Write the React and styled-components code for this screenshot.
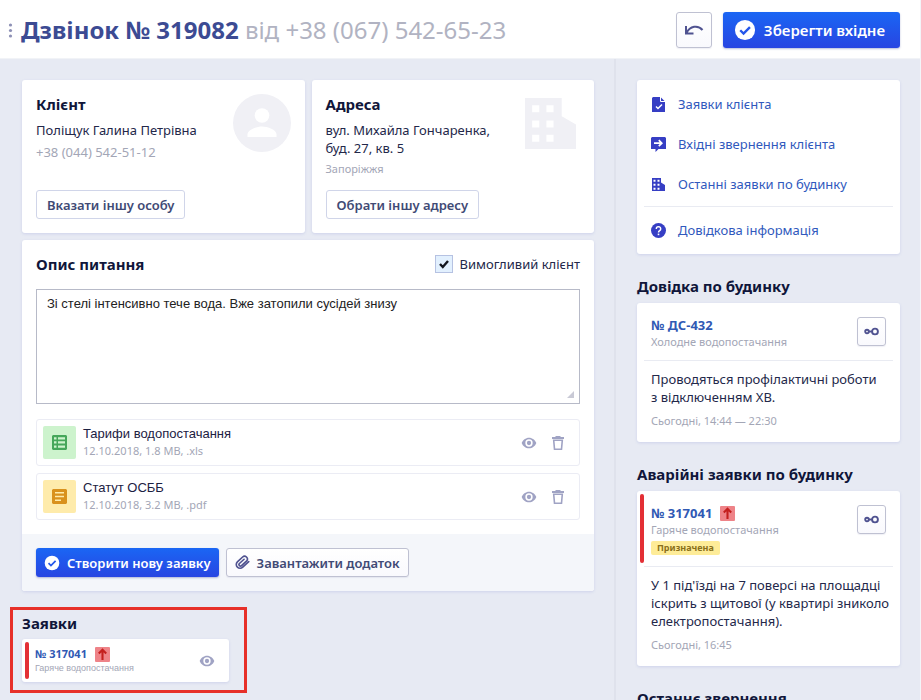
import React from 'react';
import styled, { createGlobalStyle, css } from 'styled-components';

const GlobalStyle = createGlobalStyle`
  *, *::before, *::after { box-sizing: border-box; }
  html { scrollbar-width: none; }
  body {
    margin: 0;
    background: #e7eaf3;
    color: #23284a;
    font-family: "Noto Sans", sans-serif;
    font-size: 13px;
    line-height: 18px;
  }
  h1, h2, h3, p, ul { margin: 0; padding: 0; }
  ul { list-style: none; }
  button, textarea, input { font: inherit; color: inherit; margin: 0; }
  button { cursor: pointer; }
  svg { display: block; flex: none; }
`;

const Page = styled.div`
  min-height: 100vh;
  display: flex;
  flex-direction: column;
  border-right: 1px solid #f3f5f9;
`;

const Header = styled.header`
  display: flex;
  align-items: center;
  gap: 11px;
  padding: 12px 20px 10px 8px;
  background: #fff;
  border-bottom: 1px solid #f1f3f7;
`;

const MenuHandle = styled.button`
  display: block;
  padding: 0;
  border: 0;
  background: none;
  color: #8d90b5;
`;

const PageTitle = styled.h1`
  flex: 1;
  margin-left: -3px;
  color: #3c4b93;
  font-size: 24px;
  line-height: 36px;
  font-weight: 700;
  white-space: nowrap;
`;

const Muted = styled.span`
  color: #b1b3c2;
  font-weight: 400;
`;

const heights = { large: 36, regular: 29 };

const Button = styled.button`
  display: inline-flex;
  align-items: center;
  justify-content: center;
  gap: 7px;
  height: ${(p) => heights[p.$size || 'regular']}px;
  padding: 0 ${(p) => p.$pad || 10}px;
  border: 1px solid #d0d5e9;
  border-radius: 3px;
  background: #fff;
  color: #414a75;
  font-size: 13px;
  font-weight: 600;
  white-space: nowrap;
  ${(p) => p.$variant === 'raised' && css`
    border-color: #bfc1d2;
    background: linear-gradient(#fff, #f9f9fd);
    box-shadow: 0 1px 1px rgba(60, 70, 140, 0.08);
  `}
  ${(p) => p.$variant === 'primary' && css`
    border: 0;
    background: linear-gradient(#1a66f4, #2845e2);
    color: #fff;
    box-shadow: 0 1px 2px rgba(50, 60, 150, 0.35);
  `}
  ${(p) => p.$size === 'large' && css`
    gap: 8px;
    padding: 0 15px 0 11px;
    font-size: 15px;
  `}
`;

const SquareButton = styled(Button)`
  flex: none;
  width: ${(p) => heights[p.$size || 'regular']}px;
  padding: 0;
`;

const IconButton = styled.button`
  display: block;
  padding: 0;
  border: 0;
  background: none;
  color: #a0a3c4;
`;

const Columns = styled.div`
  flex: 1;
  display: flex;
`;

const Main = styled.main`
  flex: 1;
  min-width: 0;
  padding: 21px 20px 16px 22px;
`;

const Aside = styled.aside`
  flex: none;
  width: 306px;
  padding: 21px 20px 0 21px;
  border-left: 2px solid #dfe2ec;
  display: flex;
  flex-direction: column;
  gap: 22px;
`;

const Card = styled.section`
  background: #fff;
  border-radius: 3px;
  box-shadow: 0 1px 3px rgba(80, 90, 190, 0.16);
`;

const InfoCards = styled.div`
  display: grid;
  grid-template-columns: 1fr 1fr;
  gap: 7px;
  margin-bottom: 7px;
`;

const InfoCard = styled(Card)`
  display: flex;
  justify-content: space-between;
  min-height: 153px;
  padding: 14px;
`;

const InfoBody = styled.div`
  display: flex;
  flex-direction: column;
  align-items: flex-start;

  ${Button} { margin-top: auto; }
`;

const Heading = styled.h2`
  color: #10163a;
  font-size: 15px;
  line-height: 20px;
  font-weight: 700;
`;

const InfoText = styled.p`
  margin-top: 7px;
`;

const Note = styled.p`
  margin-top: ${(p) => p.$gap || 0}px;
  color: #a3a6b6;
  font-size: ${(p) => (p.$small ? 11 : 13)}px;
`;

const Watermark = styled.div`
  color: #f0f0f5;
  ${(p) => p.$inset && css`padding: 4px 4px 0 0;`}
`;

const IssueBody = styled.div`
  padding: 14px;
`;

const IssueHead = styled.div`
  display: flex;
  align-items: center;
  justify-content: space-between;
  margin-bottom: 15px;
`;

const CheckLabel = styled.label`
  display: flex;
  align-items: center;
  gap: 7px;
`;

const CheckHolder = styled.span`
  display: grid;
  place-items: center;

  > * { grid-area: 1 / 1; }
  svg { pointer-events: none; visibility: hidden; color: #14161f; }
  input:checked + svg { visibility: visible; }
`;

const CheckInput = styled.input`
  appearance: none;
  width: 18px;
  height: 18px;
  border: 1px solid #b6c2e2;
  background: #e2f0fe;
`;

const TextHolder = styled.div`
  display: grid;

  > * { grid-area: 1 / 1; }
  svg { place-self: end; margin: 6px; pointer-events: none; }
`;

const TextArea = styled.textarea`
  display: block;
  width: 100%;
  height: 115px;
  padding: 5px 10px;
  border: 1px solid #b7bac8;
  border-radius: 0;
  resize: none;
  background: #fff;
  color: #222;
  font-family: "Liberation Sans", Arial, sans-serif;
`;

const FileList = styled.ul`
  display: grid;
  gap: 7px;
  margin-top: 15px;
`;

const FileRow = styled.li`
  display: flex;
  align-items: center;
  height: 47px;
  padding: 0 13px 0 6px;
  border: 1px solid #ebecf4;
  border-radius: 3px;
`;

const fileTones = {
  sheet: { back: '#cdf3cd', ink: '#45a75a' },
  text: { back: '#feebab', ink: '#d9911c' },
};

const FileIcon = styled.div`
  display: grid;
  place-items: center;
  width: 33px;
  height: 33px;
  border-radius: 2px;
  background: ${(p) => fileTones[p.$kind].back};
  color: ${(p) => fileTones[p.$kind].ink};
`;

const FileText = styled.div`
  flex: 1;
  margin-left: 7px;
`;

const FileName = styled.p`
  color: #1c2142;
  font-family: "Liberation Sans", Arial, sans-serif;
  line-height: 16px;
`;

const RowActions = styled.div`
  display: flex;
  align-items: center;
  gap: 13px;
`;

const IssueFooter = styled.footer`
  display: flex;
  gap: 7px;
  padding: 14px;
  border-radius: 0 0 3px 3px;
  background: #f4f6fa;
`;

const MenuCard = styled.nav`
  padding: 4px 7px;
  background: #fff;
  border-radius: 3px;
  box-shadow: 0 1px 3px rgba(80, 90, 190, 0.16);
`;

const MenuLink = styled.a`
  display: flex;
  align-items: center;
  gap: 12px;
  height: 40px;
  padding-left: 7px;
  color: #3059bd;
  text-decoration: none;

  svg { color: #363ec4; }
`;

const MenuRule = styled.hr`
  margin: 2px 0 3px;
  border: 0;
  border-top: 1px solid #e9ebf2;
`;

const AsideSection = styled.section`
  ${Heading} { margin-bottom: 7px; }
`;

const RequestHead = styled.div`
  display: flex;
  align-items: stretch;
  gap: 7px;
  padding: 3px 14px 3px 3px;
`;

const PriorityBar = styled.span`
  width: 4px;
  border-radius: 2px;
  background: ${(p) => (p.$urgent ? '#e32f35' : 'transparent')};
`;

const RequestSummary = styled.div`
  flex: 1;
  padding: 10px 0 8px;
`;

const RequestTitle = styled.h3`
  display: flex;
  align-items: center;
  gap: 8px;
  font-size: ${(p) => (p.$small ? 11 : 13)}px;
  line-height: ${(p) => (p.$small ? 16 : 18)}px;

  a { color: #3059b4; text-decoration: none; }
`;

const RequestKind = styled.p`
  color: #a3a6b6;
  font-size: 11px;
  line-height: 15px;
`;

const SmallKind = styled(RequestKind)`
  font-family: "Liberation Sans", Arial, sans-serif;
  font-size: 9px;
  line-height: 12px;
`;

const Status = styled.span`
  display: block;
  width: fit-content;
  margin-top: 4px;
  padding: 0 6px;
  border-radius: 2px;
  background: #feec98;
  color: #8a701a;
  font-size: 9px;
  line-height: 14px;
  font-weight: 700;
`;

const LinkedButton = styled(SquareButton)`
  margin-top: 11px;
`;

const RequestBody = styled.div`
  margin: 0 7px;
  padding: 9px 0 12px 7px;
  border-top: 1px solid #e9ebf2;
`;

const Requests = styled.section`
  position: relative;
  width: 207px;
  margin-top: 22px;

  ${Heading} { margin-bottom: 6px; }
`;

const Highlight = styled.div`
  position: absolute;
  inset: -6px -18px -11px -12px;
  border: 3px solid #e73029;
  pointer-events: none;
`;

const CompactRequest = styled(Card)`
  display: flex;
  gap: 6px;
  padding: 3px 14px 3px 3px;
`;

const CompactText = styled.div`
  flex: 1;
  padding: 4px 0 5px;
`;

const Icon = ({ size = 18, box = 24, children }) => (
  <svg width={size} height={size} viewBox={`0 0 ${box} ${box}`} fill="currentColor" aria-hidden="true">
    {children}
  </svg>
);

const CheckCircle = ({ size }) => (
  <Icon size={size}>
    <path d="M12 1a11 11 0 1 0 0 22 11 11 0 0 0 0-22z" />
    <path d="M6.800 12.300l3.600 3.600L17.400 8.800" fill="none" stroke="#2557ea" strokeWidth="2.600" />
  </Icon>
);

const EyeIcon = () => (
  <Icon size={16}>
    <path d="M12 4C7 4 2.700 7.400 1 12c1.700 4.600 6 8 11 8s9.300-3.400 11-8c-1.700-4.600-6-8-11-8zm0 13.500a5.500 5.500 0 1 1 0-11 5.500 5.500 0 0 1 0 11z" />
    <circle cx="12" cy="12" r="3.200" />
  </Icon>
);

const TrashIcon = () => (
  <Icon size={16} box={16}>
    <path d="M5.500 1h5v1H14v2H2V2h3.500z" />
    <path d="M3.700 5.200h8.600l-.8 9H4.500z" fill="none" stroke="currentColor" strokeWidth="1.600" />
  </Icon>
);

const ArrowBadge = () => (
  <svg width="15" height="15" viewBox="0 0 15 15" aria-hidden="true">
    <rect width="15" height="15" rx="1" fill="#ee8388" />
    <path d="M7.500 13V3M3.800 6.500L7.500 2.800 11.200 6.500" fill="none" stroke="#c4201f" strokeWidth="2.100" />
  </svg>
);

const LinkedIcon = () => (
  <svg width="15" height="9" viewBox="0 0 15 9" fill="none" stroke="#4f5290" strokeWidth="1.900" aria-hidden="true">
    <circle cx="3" cy="4.500" r="1.800" />
    <circle cx="11" cy="4.500" r="2.900" />
    <path d="M5 4.500h3" />
  </svg>
);

const ClipIcon = () => (
  <svg width="15" height="15" viewBox="0 0 24 24" fill="none" stroke="#4f5290" strokeWidth="2.600" strokeLinecap="round" aria-hidden="true">
    <path d="M22 10.500l-9.600 9a6 6 0 0 1-8.600-8.600l8.400-7.700a4.500 4.500 0 0 1 6.500 6.200l-8.200 7.600a2.400 2.400 0 0 1-3.400-3.400l7.400-6.800" />
  </svg>
);

const UndoIcon = () => (
  <svg width="20" height="14" viewBox="0 0 20 14" fill="none" stroke="#4f5290" strokeWidth="2" aria-hidden="true">
    <path d="M2 3v7.500h7.500M2.400 10C6 3 14 1.500 18.500 7" />
  </svg>
);

const TownIcon = ({ size }) => (
  <Icon size={size} box={50}>
    <path fillRule="evenodd" d="M0 0h36v18l14 8v24H0zM7 7v7h7V7zm14 0v7h7V7zM7 22v7h7v-7zm14 0v7h7v-7zM7 36v7h7v-7zm14 0v7h7v-7z" />
  </Icon>
);

const PersonIcon = () => (
  <svg width="58" height="58" viewBox="0 0 58 58" fill="currentColor" aria-hidden="true">
    <circle cx="29" cy="29" r="29" />
    <circle cx="29" cy="21.500" r="7.300" fill="#fff" />
    <path d="M14.500 43v-2.500c0-5 9-8 14.500-8s14.500 3 14.500 8V43z" fill="#fff" />
  </svg>
);

const menuIcons = {
  requests: (
    <Icon size={15} box={15}>
      <path d="M2 0h7.500L14 4.500V15H1V1z" />
      <path d="M9.500 0v4.500H14" fill="none" stroke="#fff" strokeWidth="1" />
      <path d="M5 9.500l2 2 4-4" fill="none" stroke="#fff" strokeWidth="1.500" />
    </Icon>
  ),
  calls: (
    <Icon size={15} box={15}>
      <path d="M1 0h13l1 1v11H7.500l-3 3v-3H0V1z" />
      <path d="M3 6.200h7.500M7.800 3.200l3 3-3 3" fill="none" stroke="#fff" strokeWidth="1.700" />
    </Icon>
  ),
  building: (
    <Icon size={15} box={15}>
      <path fillRule="evenodd" d="M1 1h9v4.500L14 8v6H1zM2.500 2.800v2h2v-2zm4 0v2h2v-2zm-4 4v2h2v-2zm4 0v2h2v-2zm-4 4v2h2v-2zm4 0v2h2v-2z" />
    </Icon>
  ),
  help: (
    <Icon size={15} box={15}>
      <circle cx="7.500" cy="7.500" r="7.500" />
      <path d="M5.300 5.900a2.200 2.200 0 1 1 3.400 1.800c-.8.500-1.200.9-1.200 1.800" fill="none" stroke="#fff" strokeWidth="1.500" />
      <rect x="6.700" y="10.600" width="1.600" height="1.600" fill="#fff" />
    </Icon>
  ),
};

const fileIcons = {
  sheet: (
    <Icon size={15} box={15}>
      <path fillRule="evenodd" d="M1 0h13l1 1v13l-1 1H1l-1-1V1zM2 2.200v2.300h2.500V2.200zm4 0v2.300h7V2.200zM2 6.300v2.300h2.500V6.300zm4 0v2.300h7V6.300zM2 10.400v2.400h2.500v-2.400zm4 0v2.400h7v-2.400z" />
    </Icon>
  ),
  text: (
    <Icon size={15} box={15}>
      <path fillRule="evenodd" d="M1 0h13l1 1v13l-1 1H1l-1-1V1zM3 3v1.500h9V3zm0 3.700v1.500h9V6.700zm0 3.700v1.500h6v-1.500z" />
    </Icon>
  ),
};

const files = [
  { kind: 'sheet', name: 'Тарифи водопостачання', meta: '12.10.2018, 1.8 MB, .xls' },
  { kind: 'text', name: 'Статут ОСББ', meta: '12.10.2018, 3.2 MB, .pdf' },
];

const RequestCard = ({ number, kind, urgent, status, text, date }) => (
  <Card as="article">
    <RequestHead>
      <PriorityBar $urgent={urgent} />
      <RequestSummary>
        <RequestTitle>
          <a href="#request">{number}</a>
          {urgent && <ArrowBadge />}
        </RequestTitle>
        <RequestKind>{kind}</RequestKind>
        {status && <Status>{status}</Status>}
      </RequestSummary>
      <LinkedButton $variant="raised" type="button" aria-label="Зв'язати">
        <LinkedIcon />
      </LinkedButton>
    </RequestHead>
    <RequestBody>
      <p>{text}</p>
      <Note $small $gap={6}>{date}</Note>
    </RequestBody>
  </Card>
);

export default function App() {
  return (
    <Page>
      <GlobalStyle />
      <Header>
        <MenuHandle type="button" aria-label="Меню">
          <svg width="5" height="15" viewBox="0 0 5 15" fill="currentColor" aria-hidden="true">
            <circle cx="2.500" cy="2" r="1.600" />
            <circle cx="2.500" cy="7.500" r="1.600" />
            <circle cx="2.500" cy="13" r="1.600" />
          </svg>
        </MenuHandle>
        <PageTitle>
          Дзвінок № 319082 <Muted>від +38 (067) 542-65-23</Muted>
        </PageTitle>
        <SquareButton $size="large" $variant="raised" type="button" aria-label="Скасувати">
          <UndoIcon />
        </SquareButton>
        <Button $size="large" $variant="primary" type="button">
          <CheckCircle size={22} />
          Зберегти вхідне
        </Button>
      </Header>

      <Columns>
        <Main>
          <InfoCards>
            <InfoCard>
              <InfoBody>
                <Heading>Клієнт</Heading>
                <InfoText>Поліщук Галина Петрівна</InfoText>
                <Note $gap={4}>+38 (044) 542-51-12</Note>
                <Button type="button">Вказати іншу особу</Button>
              </InfoBody>
              <Watermark>
                <PersonIcon />
              </Watermark>
            </InfoCard>
            <InfoCard>
              <InfoBody>
                <Heading>Адреса</Heading>
                <InfoText>
                  вул. Михайла Гончаренка,
                  <br />
                  буд. 27, кв. 5
                </InfoText>
                <Note $small $gap={3}>Запоріжжя</Note>
                <Button type="button">Обрати іншу адресу</Button>
              </InfoBody>
              <Watermark $inset>
                <TownIcon size={51} />
              </Watermark>
            </InfoCard>
          </InfoCards>

          <Card>
            <IssueBody>
              <IssueHead>
                <Heading as="label" htmlFor="issue">Опис питання</Heading>
                <CheckLabel>
                  <CheckHolder>
                    <CheckInput type="checkbox" defaultChecked />
                    <svg width="12" height="10" viewBox="0 0 12 10" fill="none" stroke="currentColor" strokeWidth="2.400" aria-hidden="true">
                      <path d="M2 5l2.800 3L10 2" />
                    </svg>
                  </CheckHolder>
                  Вимогливий клієнт
                </CheckLabel>
              </IssueHead>
              <TextHolder>
                <TextArea id="issue" defaultValue="Зі стелі інтенсивно тече вода. Вже затопили сусідей знизу" />
                <svg width="8" height="8" viewBox="0 0 8 8" fill="#c9cad6" aria-hidden="true">
                  <path d="M8 1v7H1z" />
                </svg>
              </TextHolder>
              <FileList>
                {files.map((file) => (
                  <FileRow key={file.name}>
                    <FileIcon $kind={file.kind}>{fileIcons[file.kind]}</FileIcon>
                    <FileText>
                      <FileName>{file.name}</FileName>
                      <Note $small>{file.meta}</Note>
                    </FileText>
                    <RowActions>
                      <IconButton type="button" aria-label="Переглянути">
                        <EyeIcon />
                      </IconButton>
                      <IconButton type="button" aria-label="Видалити">
                        <TrashIcon />
                      </IconButton>
                    </RowActions>
                  </FileRow>
                ))}
              </FileList>
            </IssueBody>
            <IssueFooter>
              <Button $variant="primary" $pad={8} type="button">
                <CheckCircle size={16} />
                Створити нову заявку
              </Button>
              <Button $variant="raised" $pad={8} type="button">
                <ClipIcon />
                Завантажити додаток
              </Button>
            </IssueFooter>
          </Card>

          <Requests>
            <Heading>Заявки</Heading>
            <CompactRequest as="article">
              <PriorityBar $urgent />
              <CompactText>
                <RequestTitle $small>
                  <a href="#request">№ 317041</a>
                  <ArrowBadge />
                </RequestTitle>
                <SmallKind>Гаряче водопостачання</SmallKind>
              </CompactText>
              <IconButton type="button" aria-label="Переглянути">
                <EyeIcon />
              </IconButton>
            </CompactRequest>
            <Highlight />
          </Requests>
        </Main>

        <Aside>
          <MenuCard>
            <MenuLink href="#requests">{menuIcons.requests}Заявки клієнта</MenuLink>
            <MenuLink href="#calls">{menuIcons.calls}Вхідні звернення клієнта</MenuLink>
            <MenuLink href="#building">{menuIcons.building}Останні заявки по будинку</MenuLink>
            <MenuRule />
            <MenuLink href="#help">{menuIcons.help}Довідкова інформація</MenuLink>
          </MenuCard>

          <AsideSection>
            <Heading>Довідка по будинку</Heading>
            <RequestCard
              number="№ ДС-432"
              kind="Холодне водопостачання"
              text={<>Проводяться профілактичні роботи<br />з відключенням ХВ.</>}
              date="Сьогодні, 14:44 — 22:30"
            />
          </AsideSection>

          <AsideSection>
            <Heading>Аварійні заявки по будинку</Heading>
            <RequestCard
              urgent
              number="№ 317041"
              kind="Гаряче водопостачання"
              status="Призначена"
              text="У 1 під'їзді на 7 поверсі на площадці іскрить з щитової (у квартирі зниколо електропостачання)."
              date="Сьогодні, 16:45"
            />
          </AsideSection>

          <AsideSection>
            <Heading>Останнє звернення</Heading>
          </AsideSection>
        </Aside>
      </Columns>
    </Page>
  );
}
